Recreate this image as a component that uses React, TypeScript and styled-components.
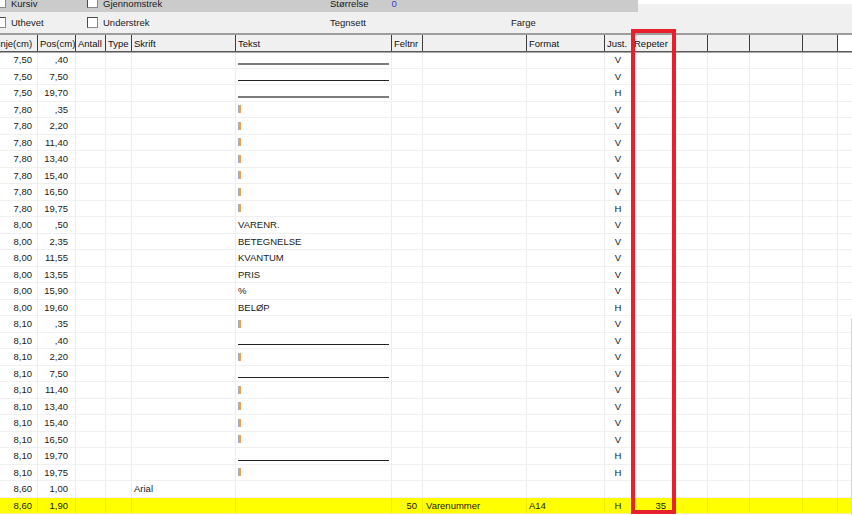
import React, { FC } from 'react'
import styled, { createGlobalStyle, css } from 'styled-components'

const GlobalStyle = createGlobalStyle`
  html, body {
    margin: 0;
    padding: 0;
    background: #ffffff;
  }
  body {
    font-family: 'Liberation Sans', Arial, sans-serif;
  }
`

// column widths, left to right, px
const COLS = [38, 38, 30, 26, 104, 156, 31, 104, 78, 27, 44, 32, 42, 53, 35]
const gridTemplate = COLS.map((w) => `${w}px`).join(' ') + ' 1fr'

const Page = styled.div`
  position: relative;
  width: 852px;
  height: 515px;
  overflow: hidden;
  display: flex;
  flex-direction: column;
  background: #ffffff;
  color: #1a1a1a;
  font-size: 9.5px;
`

/* ---------- font options panel (scrolled up) ---------- */

const FormPanel = styled.div`
  height: 33px;
  background: #f0f0f0;
  display: flex;
  flex-direction: column;
`

const TopStrip = styled.div`
  height: 12px;
  display: flex;
`

const GreyBand = styled.div`
  width: 643px;
  height: 12px;
  background: #cbcbcb;
  display: flex;
  align-items: flex-start;
  overflow: hidden;
  margin-left: -5px;
`

const WhiteEdge = styled.div`
  flex: 1;
  background: linear-gradient(#ffffff 0 4px, #f0f0f0 4px);
`

const FormRow = styled.div`
  height: 21px;
  display: flex;
  align-items: center;
  margin-left: -5px;
`

const FormGroup = styled.div<{ $w?: number; $top?: boolean }>`
  display: flex;
  align-items: ${({ $top }) => ($top ? 'flex-start' : 'center')};
  width: ${({ $w }) => ($w ? `${$w}px` : 'auto')};
  flex-shrink: 0;
`

const Check = styled.span<{ $top?: boolean }>`
  display: inline-block;
  width: 11px;
  height: 11px;
  box-sizing: border-box;
  border: 1px solid #4a4a4a;
  border-right-color: #8a8a8a;
  border-bottom-color: #8a8a8a;
  background: #ffffff;
  margin-right: 5px;
  ${({ $top }) =>
    $top &&
    css`
      margin-top: -3px;
    `}
`

const Label = styled.span<{ $top?: boolean; $gap?: number }>`
  line-height: 12px;
  white-space: nowrap;
  color: #1a1a1a;
  margin-right: ${({ $gap }) => ($gap ? `${$gap}px` : '0')};
  ${({ $top }) =>
    $top &&
    css`
      margin-top: -2.5px;
    `}
`

const Value = styled(Label)`
  color: #3b3bc4;
`

/* ---------- grid ---------- */

const Grid = styled.div`
  display: flex;
  flex-direction: column;
`

const HeaderRow = styled.div`
  display: grid;
  grid-template-columns: ${gridTemplate};
  height: 19px;
  box-sizing: border-box;
  border-top: 2px solid #9c9c9c;
  border-bottom: 1px solid #5a5a5a;
  box-shadow: 0 1px 0 #a8a8a8;
  position: relative;
  z-index: 1;
`

const HeaderCell = styled.div<{ $indent?: number; $blank?: boolean }>`
  background: ${({ $blank }) => ($blank ? '#ffffff' : '#f0f0f0')};
  border-right: ${({ $blank }) => ($blank ? 'none' : '1px solid #3c3c3c')};
  display: flex;
  align-items: center;
  padding-left: 2px;
  overflow: hidden;
  white-space: nowrap;
  color: #111;
  text-indent: ${({ $indent }) => ($indent ? `${$indent}px` : '0')};
`

const BodyRow = styled.div<{ $hl?: boolean }>`
  display: grid;
  grid-template-columns: ${gridTemplate};
  height: 16.5px;
  box-sizing: border-box;
  border-bottom: 1px solid ${({ $hl }) => ($hl ? '#f2f2a0' : '#f0f0f0')};
  background: ${({ $hl }) => ($hl ? '#ffff00' : '#ffffff')};
`

type Align = 'left' | 'right' | 'center'

const Cell = styled.div<{ $align?: Align; $pad?: number; $last?: boolean }>`
  display: flex;
  align-items: center;
  justify-content: ${({ $align }) =>
    $align === 'right' ? 'flex-end' : $align === 'center' ? 'center' : 'flex-start'};
  padding: ${({ $align, $pad = 2 }) =>
    $align === 'right' ? `0 ${$pad}px 0 0` : `0 0 0 ${$pad}px`};
  border-right: ${({ $last }) => ($last ? 'none' : '1px solid rgba(0, 0, 0, 0.07)')};
  overflow: hidden;
  white-space: nowrap;
  position: relative;
`

const Underline = styled.span<{ $soft?: boolean }>`
  position: absolute;
  left: 2px;
  right: 2px;
  bottom: 3px;
  height: ${({ $soft }) => ($soft ? '2px' : '1px')};
  background: ${({ $soft }) => ($soft ? '#7c7c7c' : '#222222')};
`

const Bar = styled.span`
  width: 3px;
  height: 8px;
  background: linear-gradient(90deg, #a3abc0 0 1px, #eea24a 1px);
`

const RedFrame = styled.div`
  position: absolute;
  left: 631px;
  top: 29px;
  width: 45px;
  height: 485px;
  box-sizing: border-box;
  border: 4px solid #e8202b;
  pointer-events: none;
  z-index: 5;
`

const ScrollEdge = styled.div`
  position: absolute;
  right: 0;
  top: 318px;
  width: 1px;
  bottom: 0;
  background: #d6d6d6;
`

type Mark = 'line' | 'soft' | 'bar'

interface Line {
  l: string
  p: string
  skrift?: string
  tekst?: string
  mark?: Mark
  felt?: string
  navn?: string
  format?: string
  just?: string
  rep?: string
  hl?: boolean
}

const lines: Line[] = [
  { l: '7,50', p: ',40', mark: 'soft', just: 'V' },
  { l: '7,50', p: '7,50', mark: 'line', just: 'V' },
  { l: '7,50', p: '19,70', mark: 'soft', just: 'H' },
  { l: '7,80', p: ',35', mark: 'bar', just: 'V' },
  { l: '7,80', p: '2,20', mark: 'bar', just: 'V' },
  { l: '7,80', p: '11,40', mark: 'bar', just: 'V' },
  { l: '7,80', p: '13,40', mark: 'bar', just: 'V' },
  { l: '7,80', p: '15,40', mark: 'bar', just: 'V' },
  { l: '7,80', p: '16,50', mark: 'bar', just: 'V' },
  { l: '7,80', p: '19,75', mark: 'bar', just: 'H' },
  { l: '8,00', p: ',50', tekst: 'VARENR.', just: 'V' },
  { l: '8,00', p: '2,35', tekst: 'BETEGNELSE', just: 'V' },
  { l: '8,00', p: '11,55', tekst: 'KVANTUM', just: 'V' },
  { l: '8,00', p: '13,55', tekst: 'PRIS', just: 'V' },
  { l: '8,00', p: '15,90', tekst: '%', just: 'V' },
  { l: '8,00', p: '19,60', tekst: 'BELØP', just: 'H' },
  { l: '8,10', p: ',35', mark: 'bar', just: 'V' },
  { l: '8,10', p: ',40', mark: 'line', just: 'V' },
  { l: '8,10', p: '2,20', mark: 'bar', just: 'V' },
  { l: '8,10', p: '7,50', mark: 'line', just: 'V' },
  { l: '8,10', p: '11,40', mark: 'bar', just: 'V' },
  { l: '8,10', p: '13,40', mark: 'bar', just: 'V' },
  { l: '8,10', p: '15,40', mark: 'bar', just: 'V' },
  { l: '8,10', p: '16,50', mark: 'bar', just: 'V' },
  { l: '8,10', p: '19,70', mark: 'line', just: 'H' },
  { l: '8,10', p: '19,75', mark: 'bar', just: 'H' },
  { l: '8,60', p: '1,00', skrift: 'Arial' },
  {
    l: '8,60',
    p: '1,90',
    felt: '50',
    navn: 'Varenummer',
    format: 'A14',
    just: 'H',
    rep: '35',
    hl: true,
  },
]

const headers = [
  'Linje(cm)',
  'Pos(cm)',
  'Antall',
  'Type',
  'Skrift',
  'Tekst',
  'Feltnr',
  '',
  'Format',
  'Just.',
  'Repeter',
  '',
  '',
  '',
  '',
]

const TextCell: FC<{ line: Line }> = ({ line }) => {
  if (line.mark === 'bar')
    return (
      <Cell>
        <Bar />
      </Cell>
    )
  if (line.mark === 'line' || line.mark === 'soft')
    return (
      <Cell>
        <Underline $soft={line.mark === 'soft'} />
      </Cell>
    )
  return <Cell>{line.tekst}</Cell>
}

const App: FC = () => {
  return (
    <>
      <GlobalStyle />
      <Page>
        <FormPanel>
          <TopStrip>
            <GreyBand>
              <FormGroup $w={92} $top>
                <Check $top />
                <Label $top>Kursiv</Label>
              </FormGroup>
              <FormGroup $w={243} $top>
                <Check $top />
                <Label $top>Gjennomstrek</Label>
              </FormGroup>
              <FormGroup $top>
                <Label $top $gap={23}>
                  Størrelse
                </Label>
                <Value $top>0</Value>
              </FormGroup>
            </GreyBand>
            <WhiteEdge />
          </TopStrip>
          <FormRow>
            <FormGroup $w={92}>
              <Check />
              <Label>Uthevet</Label>
            </FormGroup>
            <FormGroup $w={243}>
              <Check />
              <Label>Understrek</Label>
            </FormGroup>
            <FormGroup $w={181}>
              <Label>Tegnsett</Label>
            </FormGroup>
            <FormGroup>
              <Label>Farge</Label>
            </FormGroup>
          </FormRow>
        </FormPanel>

        <Grid>
          <HeaderRow>
            {headers.map((h, i) => (
              <HeaderCell key={i} $indent={i === 0 ? -9 : 0}>
                {h}
              </HeaderCell>
            ))}
            <HeaderCell $blank />
          </HeaderRow>

          {lines.map((line, i) => (
            <BodyRow key={`${i}-${line.l}-${line.p}`} $hl={line.hl}>
              <Cell $align="right" $pad={5}>
                {line.l}
              </Cell>
              <Cell $align="right" $pad={7}>
                {line.p}
              </Cell>
              <Cell />
              <Cell />
              <Cell>{line.skrift}</Cell>
              <TextCell line={line} />
              <Cell $align="right" $pad={5}>
                {line.felt}
              </Cell>
              <Cell $pad={3}>{line.navn}</Cell>
              <Cell>{line.format}</Cell>
              <Cell $align="center" $pad={0}>
                {line.just}
              </Cell>
              <Cell $align="right" $pad={9}>
                {line.rep}
              </Cell>
              <Cell />
              <Cell />
              <Cell />
              <Cell />
              <Cell $last />
            </BodyRow>
          ))}
        </Grid>

        <RedFrame />
        <ScrollEdge />
      </Page>
    </>
  )
}

export default App
